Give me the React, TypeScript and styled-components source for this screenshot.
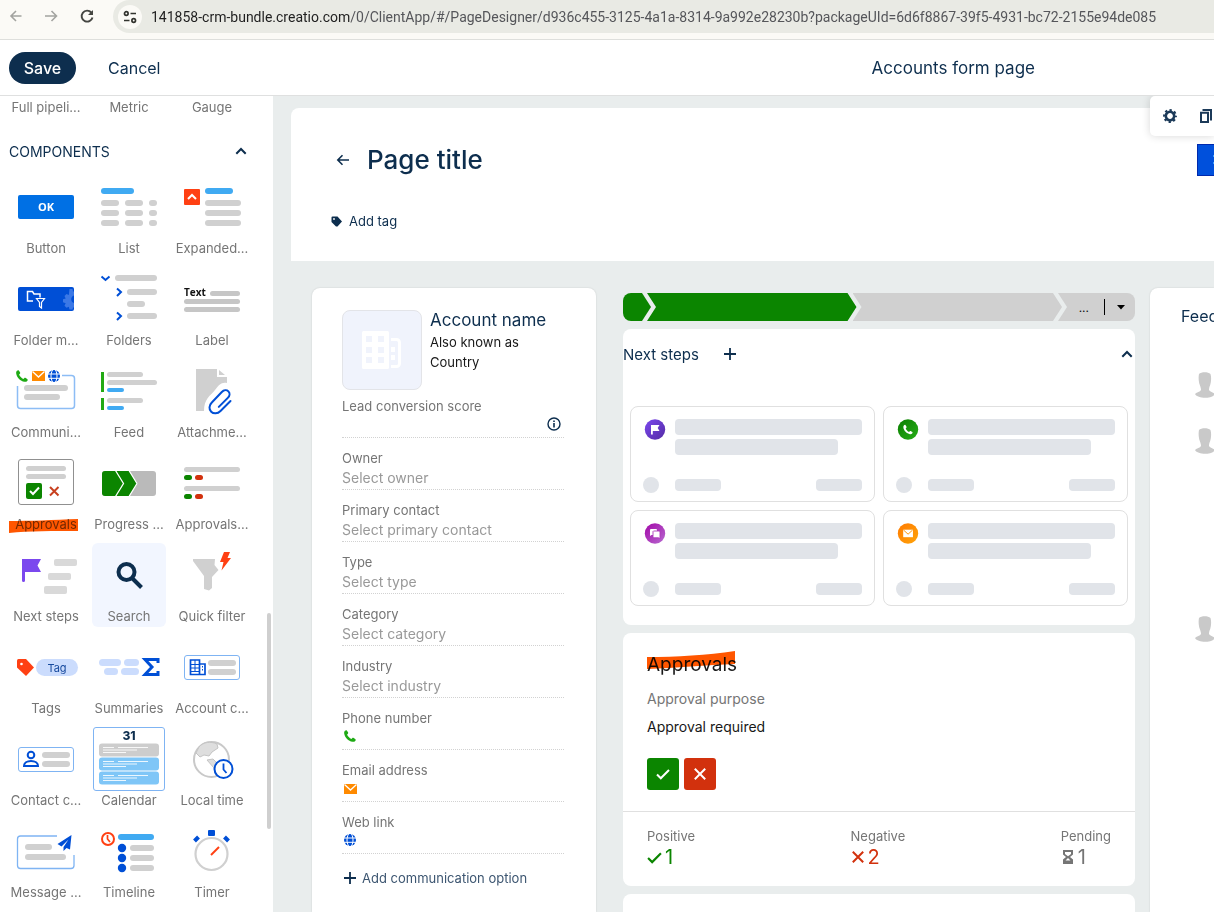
import React, { useId } from "react";
import styled, { createGlobalStyle } from "styled-components";

const navy = "#0d2e4e";
const blue = "#004fd6";
const sky = "#40aaf2";
const grey = "#d0d0d0";
const green = "#0b8500";
const red = "#d2310d";
const orangeRed = "#ff4013";

const GlobalStyle = createGlobalStyle`
  * { box-sizing: border-box; }
  body {
    margin: 0;
    overflow: hidden;
    font-family: Inter, "Open Sans", sans-serif;
    font-size: 13px;
    color: ${navy};
    background: #fff;
  }
  button, input { font: inherit; color: inherit; }
  button { border: 0; padding: 0; background: none; cursor: pointer; }
  h1, h2, h3, p { margin: 0; font-weight: 400; }
  svg { display: block; flex: none; }
`;

/* ---------- frame ---------- */

const Shell = styled.div`
  display: flex;
  flex-direction: column;
  height: 100vh;
`;

const BrowserBar = styled.div`
  flex: none;
  display: flex;
  align-items: flex-start;
  height: 40px;
  padding-left: 9px;
  background: #fbfaf6;
  border-bottom: 1px solid #dedfdc;
`;

const NavButtons = styled.nav`
  display: flex;
  align-items: center;
  gap: 20px;
  width: 104px;
  height: 32px;
`;

const AddressBar = styled.div`
  flex: 1;
  min-width: 0;
  display: flex;
  align-items: center;
  gap: 9px;
  height: 33px;
  padding-left: 5px;
  border-radius: 17px 0 0 17px;
  background: #e9eae4;
  overflow: hidden;
`;

const SiteInfo = styled.button`
  display: grid;
  place-items: center;
  flex: none;
  width: 24px;
  height: 24px;
  border-radius: 12px;
  background: #fbfaf6;
`;

const Url = styled.span`
  font-family: Roboto, "Open Sans", sans-serif;
  font-size: 14px;
  line-height: 20px;
  white-space: nowrap;
  color: #55565a;
`;

const Domain = styled.span`
  color: #1f1f1f;
`;

const Header = styled.header`
  flex: none;
  display: flex;
  align-items: center;
  height: 56px;
  padding: 0 179px 0 9px;
  border-bottom: 1px solid #dfe0e0;
  font-size: 16px;
`;

const SaveButton = styled.button`
  width: 67px;
  height: 32px;
  border-radius: 16px;
  background: ${navy};
  color: #fff;
  font-weight: 500;
`;

const CancelButton = styled.button`
  margin-left: 32px;
`;

const HeaderTitle = styled.h1`
  margin-left: auto;
  font-size: 17px;
  white-space: nowrap;
`;

const Workspace = styled.div`
  flex: 1;
  min-height: 0;
  display: flex;
`;

/* ---------- component palette ---------- */

const Sidebar = styled.aside`
  position: relative;
  flex: none;
  width: 273px;
  padding-left: 9px;
  overflow: hidden;
  color: #757575;
`;

const ScrollThumb = styled.div`
  position: absolute;
  top: 517px;
  right: 2px;
  width: 4px;
  height: 216px;
  border-radius: 2px;
  background: #cfcfcf;
`;

const TileGrid = styled.div`
  display: grid;
  grid-template-columns: repeat(3, 74px);
  gap: 8px 9px;
`;

const PreviousGroup = styled(TileGrid)`
  height: 24px;
  padding-top: 2px;
`;

const Tile = styled.button<{ $active?: boolean }>`
  position: relative;
  display: flex;
  flex-direction: column;
  align-items: center;
  height: 84px;
  border-radius: 6px;
  background: ${(p) => (p.$active ? "#f2f6ff" : "transparent")};
`;

const TileLabel = styled.span`
  line-height: 18px;
  white-space: nowrap;
  text-align: center;
`;

const GroupHeader = styled.button`
  display: flex;
  align-items: center;
  justify-content: space-between;
  width: 238px;
  height: 22px;
  margin: 20px 0 13px;
  color: ${navy};
  font-size: 14px;
`;

const Marker = styled.svg`
  position: absolute;
  mix-blend-mode: multiply;
  pointer-events: none;
`;

const TileMarker = styled(Marker)`
  left: 0;
  top: 67px;
`;

/* ---------- canvas ---------- */

const Canvas = styled.main`
  position: relative;
  flex: 1;
  min-width: 0;
  display: flex;
  flex-direction: column;
  padding: 12px 0 0 18px;
  background: #e9eded;
  overflow: hidden;
`;

const TitlePanel = styled.section`
  flex: none;
  display: flex;
  justify-content: space-between;
  height: 153px;
  padding: 36px 0 0 40px;
  border-radius: 8px 0 0 0;
  background: #fff;
`;

const TitleRow = styled.div`
  display: flex;
  align-items: center;
  gap: 17px;
  height: 32px;
  padding-left: 5px;
`;

const PageTitle = styled.h2`
  font-size: 26px;
  font-weight: 500;
  line-height: 32px;
`;

const AddTag = styled.button`
  display: flex;
  align-items: center;
  gap: 7px;
  margin-top: 35px;
  line-height: 20px;
`;

const PrimaryEdge = styled.button`
  width: 17px;
  height: 32px;
  padding-left: 15px;
  border: solid #0029ad;
  border-width: 1px 0 1px 1px;
  background: #0050dc;
`;

const FloatingTools = styled.div`
  position: absolute;
  top: 0;
  right: 0;
  display: flex;
  align-items: center;
  gap: 22px;
  width: 64px;
  height: 40px;
  padding-left: 13px;
  border-radius: 5px 0 0 5px;
  background: #fff;
  box-shadow: 0 0 8px rgba(0, 0, 0, 0.16);
  overflow: hidden;
`;

const Columns = styled.div`
  flex: 1;
  min-height: 0;
  display: grid;
  grid-template-columns: 284px minmax(0, 1fr) 64px;
  padding: 27px 0 0 21px;
`;

const Panel = styled.section`
  background: #fff;
  border-radius: 8px;
`;

/* ---------- account profile ---------- */

const Profile = styled(Panel)`
  padding: 22px 32px 0 30px;
  border-radius: 8px 8px 0 0;
  box-shadow: 0 0 2px rgba(0, 0, 0, 0.14);
`;

const ProfileTop = styled.div`
  display: flex;
  gap: 8px;
`;

const Logo = styled.div`
  display: grid;
  place-items: center;
  width: 80px;
  height: 80px;
  border: 1px solid #e3e4e8;
  border-radius: 8px;
  background: #f0f3fc;
`;

const Identity = styled.div`
  color: #181818;
  line-height: 20px;
`;

const AccountName = styled.h3`
  color: ${navy};
  font-size: 17px;
  line-height: 20px;
  margin-bottom: 2px;
`;

const Field = styled.div`
  display: flex;
  flex-direction: column;
  height: 52px;
  padding-top: 11px;
  border-bottom: 1px dotted #d2d2d2;
  color: #757575;
`;

const ScoreField = styled(Field)`
  height: 48px;
  padding-top: 7px;
`;

const FieldLabel = styled.label`
  line-height: 18px;
`;

const FieldValue = styled.div`
  display: flex;
  align-items: center;
  height: 18px;
`;

const FieldInput = styled.input`
  width: 100%;
  min-width: 0;
  height: 20px;
  padding: 0;
  border: 0;
  outline: 0;
  background: none;
  font-size: 14px;
  &::placeholder { color: #999; opacity: 1; }
`;

const AddOption = styled.button`
  display: flex;
  align-items: center;
  gap: 6px;
  margin-top: 14px;
  padding-left: 2px;
  line-height: 20px;
  color: #3d5671;
`;

/* ---------- middle column ---------- */

const Middle = styled.div`
  display: flex;
  flex-direction: column;
  gap: 8px;
  padding: 5px 15px 0 27px;
`;

const Stages = styled.div`
  flex: none;
  display: flex;
  height: 28px;
  border-radius: 8px;
  overflow: hidden;
`;

const StageStart = styled.div`
  width: 28px;
  background: ${green};
  clip-path: polygon(0 0, calc(100% - 9px) 0, 100% 50%, calc(100% - 9px) 100%, 0 100%);
`;

const Stage = styled.div<{ $done?: boolean }>`
  flex: 1;
  margin-left: -4px;
  background: ${(p) => (p.$done ? green : grey)};
  clip-path: polygon(0 0, calc(100% - 9px) 0, 100% 50%, calc(100% - 9px) 100%, 0 100%, 9px 50%);
`;

const StageMenu = styled.div`
  display: flex;
  align-items: center;
  justify-content: flex-end;
  width: 77px;
  margin-left: -4px;
  padding-right: 9px;
  background: ${grey};
  color: #111;
  font-size: 12px;
  clip-path: polygon(0 0, 100% 0, 100% 100%, 0 100%, 9px 50%);
`;

const StageCaret = styled.button`
  display: flex;
  align-items: center;
  height: 16px;
  margin-left: 15px;
  padding-left: 11px;
  border-left: 1px solid #000;
`;

const NextSteps = styled(Panel)`
  flex: none;
  height: 296px;
`;

const NextHeader = styled.div`
  display: flex;
  align-items: center;
  height: 50px;
  padding-right: 2px;
`;

const NextTitle = styled.h3`
  width: 101px;
  font-size: 15px;
`;

const Collapse = styled.button`
  margin-left: auto;
`;

const CardGrid = styled.div`
  display: grid;
  grid-template-columns: 1fr 1fr;
  gap: 8px;
  padding: 27px 7px 0;
`;

const StepCard = styled.article`
  display: grid;
  grid-template-columns: 32px 1fr;
  align-content: space-between;
  height: 96px;
  padding: 12px 12px 8px;
  border: 1px solid #e0e0e0;
  border-radius: 8px;
`;

const Bars = styled.div`
  display: flex;
  flex-direction: column;
  gap: 4px;
`;

const FootBars = styled.div`
  display: flex;
  justify-content: space-between;
  align-items: center;
`;

const Bone = styled.div<{ $size: "full" | "long" | "short" }>`
  width: ${(p) => ({ full: "100%", long: "87%", short: "46px" })[p.$size]};
  height: ${(p) => (p.$size === "short" ? "12px" : "16px")};
  border-radius: 4px;
  background: #e1e4e9;
`;

const BoneDot = styled.div`
  width: 16px;
  height: 16px;
  border-radius: 8px;
  background: #e1e4e9;
`;

const Approvals = styled(Panel)`
  flex: none;
`;

const ApprovalBody = styled.div`
  height: 179px;
  padding: 20px 24px 0;
  border-bottom: 1px solid #e0e0e0;
`;

const ApprovalTitle = styled.h3`
  position: relative;
  color: #181818;
  font-size: 19px;
  line-height: 24px;
`;

const TitleMarker = styled(Marker)`
  left: 0;
  top: -2px;
`;

const Purpose = styled.p<{ $strong?: boolean }>`
  margin-top: ${(p) => (p.$strong ? 8 : 12)}px;
  font-size: 14px;
  line-height: 20px;
  color: ${(p) => (p.$strong ? "#181818" : "#757575")};
`;

const Decisions = styled.div`
  display: flex;
  gap: 5px;
  margin-top: 21px;
`;

const Decision = styled.button<{ $color: string }>`
  display: grid;
  place-items: center;
  width: 32px;
  height: 32px;
  border-radius: 3px;
  background: ${(p) => p.$color};
`;

const Totals = styled.div`
  display: flex;
  justify-content: space-between;
  height: 74px;
  padding: 16px 24px 0;
  color: #757575;
`;

const TotalLabel = styled.div`
  line-height: 16px;
`;

const TotalValue = styled.div<{ $color: string }>`
  display: flex;
  align-items: center;
  gap: 3px;
  height: 26px;
  font-size: 20px;
  color: ${(p) => p.$color};
`;

const NextPanel = styled(Panel)`
  flex: 1;
  border-radius: 8px 8px 0 0;
`;

/* ---------- feed column ---------- */

const Feed = styled(Panel)`
  border-radius: 8px 0 0 0;
  box-shadow: 0 0 2px rgba(0, 0, 0, 0.14);
  padding-top: 17px;
  overflow: hidden;
`;

const FeedTitle = styled.h3`
  padding-left: 31px;
  font-size: 16px;
  line-height: 22px;
`;

const FeedItem = styled.div<{ $tall?: boolean }>`
  height: ${(p) => (p.$tall ? 188 : 56)}px;
  padding-left: 45px;
`;

const FeedList = styled.div`
  margin-top: 45px;
`;

/* ---------- glyphs ---------- */

const Chevron = () => (
  <svg width="12" height="8" viewBox="0 0 12 8" aria-hidden="true">
    <path d="M1.3 6.800 6 2l4.700 4.800" fill="none" stroke={navy} strokeWidth="2" />
  </svg>
);

const Plus = () => (
  <svg width="12" height="12" viewBox="0 0 12 12" aria-hidden="true">
    <path d="M6 0v12M0 6h12" stroke={navy} strokeWidth="1.800" />
  </svg>
);

const phonePath =
  "M1 .8C.3 1.500 0 2.400.2 3.500.8 7.600 4.400 11.200 8.500 11.800c1.100.2 2-.1 2.700-.8.6-.6.700-1.200.3-1.800L9.700 8.100c-.6-.4-1.100-.3-1.500.1l-.8.8C5.500 8.200 3.800 6.500 3.100 4.600l.8-.8c.4-.4.5-.9.1-1.500L2.800.5C2.300-.1 1.600.2 1 .8z";

const PhoneShape = ({ color }: { color: string }) => <path d={phonePath} fill={color} />;

const MailShape = ({ color, fold }: { color: string; fold: string }) => (
  <>
    <rect width="13" height="10" fill={color} />
    <path d="M.5.5 6.500 6l6-5.500" fill="none" stroke={fold} strokeWidth="1.300" />
  </>
);

const GlobeShape = () => (
  <>
    <circle r="6" fill={blue} />
    <path
      d="M-6-2h12M-6 2.300h12M-1.500-6c-2 4-2 8 0 12M1.500-6c2 4 2 8 0 12"
      fill="none"
      stroke="#fff"
      strokeWidth="1"
    />
  </>
);

const B = ({ x, y, w, h = 6, c = grey, r }: { x: number; y: number; w: number; h?: number; c?: string; r?: number }) => (
  <rect x={x} y={y} width={w} height={h} rx={r ?? h / 2} fill={c} />
);

const Frame = ({ x, y, w, h, c = "#7fb4f3" }: { x: number; y: number; w: number; h: number; c?: string }) => (
  <rect x={x} y={y} width={w} height={h} rx="2.500" fill="#fff" stroke={c} />
);

const CalendarBlock = ({ y, c }: { y: number; c: string }) => (
  <>
    <rect x="7" y={y} width="60" height="13" rx="3" fill={c} />
    <path
      d={`M11 ${y + 4}h11M26 ${y + 4}h30M11 ${y + 6.5}h34M11 ${y + 9}h23`}
      stroke="#fff"
      strokeOpacity=".85"
      strokeWidth="1"
    />
  </>
);

const svgFont = { fontFamily: '"Open Sans", sans-serif', fontWeight: 700 };

const drawings: Record<string, React.ReactNode> = {
  Button: (
    <>
      <rect x="9" y="20" width="56" height="24" rx="2" fill="#0070e4" />
      <text x="37" y="36" textAnchor="middle" fontSize="11" fill="#fff" {...svgFont}>OK</text>
    </>
  ),
  List: (
    <>
      <B x={9} y={13} w={33} c={sky} />
      {[25, 35, 45].map((y) => (
        <g key={y}>
          <B x={9} y={y} w={18} />
          <B x={33} y={y} w={18} />
          <B x={57} y={y} w={8} />
        </g>
      ))}
    </>
  ),
  "Expanded...": (
    <>
      <rect x="9" y="14" width="16" height="16" rx="1" fill={orangeRed} />
      <path d="m13 24 4-4 4 4" fill="none" stroke="#fff" strokeWidth="2" />
      <B x={30} y={13} w={28} c={sky} />
      <B x={30} y={25} w={36} />
      <B x={30} y={35} w={36} />
      <B x={30} y={45} w={36} />
    </>
  ),
  "Folder m...": (
    <>
      <rect x="9" y="20" width="56" height="24" rx="2" fill={blue} />
      <path d="M24 34h-5.500v-9.500h5l1.500 2.500h6v3.500" fill="none" stroke="#fff" strokeWidth="1.500" />
      <path d="M27.500 31.500h8l-3 4v5.500l-2-1.500v-4z" fill="none" stroke="#fff" strokeWidth="1.200" />
      <path
        d="M60.500 22h3l.5 2.500H65v4a4 4 0 0 0 0 7.600v4.400h-1l-.5 2h-3l-.7-2.700-2.300 1-2-2 1.200-2.500-2.700-1v-3l2.700-.8-1.200-2.400 2-2.100 2.300 1z"
        fill="#3b78e6"
      />
    </>
  ),
  Folders: (
    <>
      <path d="m9.500 9.500 4 3.500 4-3.500M25 21.500l4 3.500-4 4M25 45.500l4 3.500-4 4" fill="none" stroke={blue} strokeWidth="2" />
      <B x={23} y={8} w={42} />
      <B x={35} y={22} w={30} />
      <B x={35} y={34} w={18} />
      <B x={35} y={46} w={30} />
    </>
  ),
  Label: (
    <>
      <text x="9" y="29" fontSize="10" fill="#111" {...svgFont}>Text</text>
      <B x={35} y={24} w={30} h={5} c="#c6c6c6" />
      <B x={9} y={32} w={56} h={5} c="#c6c6c6" />
      <B x={9} y={40} w={56} h={5} c="#c6c6c6" />
    </>
  ),
  "Communi...": (
    <>
      <path
        d="M53 16.500h9.500a3 3 0 0 1 3 3v27a3 3 0 0 1-3 3h-51a3 3 0 0 1-3-3V27"
        fill="none"
        stroke="#8dbdf5"
        strokeWidth="1.500"
      />
      <g transform="translate(7 11)"><PhoneShape color="#1eaa14" /></g>
      <g transform="translate(23 12)"><MailShape color="#ff8a00" fold="#fff" /></g>
      <g transform="translate(45 17)"><GlobeShape /></g>
      <B x={15} y={26} w={44} />
      <B x={15} y={35} w={36} />
    </>
  ),
  Feed: (
    <>
      <rect x="9" y="13" width="3" height="20" fill="#22aa14" />
      <rect x="9" y="39" width="3" height="12" fill="#22aa14" />
      <B x={15} y={13} w={36} h={5} />
      <B x={15} y={21} w={50} h={5} />
      <B x={15} y={29} w={17} h={4} c={sky} />
      <B x={15} y={39} w={36} h={5} />
      <B x={15} y={47} w={17} h={4} c={sky} />
    </>
  ),
  "Attachme...": (
    <>
      <path d="M21 10h21v8h10v6c-6-1-8 2-12 7-5 6-11 9-11 21h-8z" fill={grey} />
      <path d="M44 11v5h6z" fill={grey} />
      <path
        d="M55.500 42 45.500 52c-3 3-7 3-9.300.7-2.500-2.500-2.200-6.400.6-9.200l10-10.500c2-2 4.800-2.400 6.600-.6 1.800 1.800 1.400 4.500-.6 6.500l-9 9"
        fill="none"
        stroke={blue}
        strokeWidth="2"
        strokeLinecap="round"
      />
    </>
  ),
  Approvals: (
    <>
      <Frame x={9.5} y={8.5} w={55} h={45} c="#909090" />
      <B x={17} y={15} w={40} h={5} />
      <B x={17} y={23} w={40} h={5} />
      <rect x="17" y="32" width="16" height="16" rx="2" fill={green} />
      <path d="m21 40 3 3 6-6.500" fill="none" stroke="#fff" strokeWidth="2" />
      <path d="m41 36 8.500 8.500M49.500 36 41 44.500" stroke="#c8401f" strokeWidth="2" />
    </>
  ),
  "Progress ...": (
    <>
      <rect x="10" y="20" width="54" height="25" rx="3" fill="#bababa" />
      <path d="M13 20h24l8.500 12.500L37 45H13a3 3 0 0 1-3-3V23a3 3 0 0 1 3-3z" fill={green} />
      <path d="m23.500 19.500 8 13-8 13M37 19.500l8 13-8 13" fill="none" stroke="#fff" strokeWidth="1.300" />
    </>
  ),
  "Approvals...": (
    <>
      {[16, 35].map((y) => (
        <g key={y}>
          <B x={9} y={y} w={56} h={5} />
          <B x={9} y={y + 8} w={8} h={5} c={green} />
          <B x={20} y={y + 8} w={8} h={5} c={red} />
        </g>
      ))}
    </>
  ),
  "Next steps": (
    <>
      <path d="M13 16h19l-3.500 6.500L32 29H16v8.500a1.500 1.500 0 0 1-3 0z" fill="#7b48ee" />
      <B x={45} y={16} w={23} h={7} c="#d9d9d9" r={2} />
      <B x={39} y={30} w={23} h={7} c="#d9d9d9" r={2} />
      <B x={35} y={43} w={23} h={8} c="#d9d9d9" r={2} />
    </>
  ),
  Search: (
    <>
      <circle cx="34.500" cy="29" r="8" fill="none" stroke={navy} strokeWidth="4" />
      <path d="m40 35 9.500 9.500" stroke={navy} strokeWidth="4" />
    </>
  ),
  "Quick filter": (
    <>
      <path d="M18 16h22l-.5 6 4 5-6.500 7v11l-3 2.500-5-1.500V33L18 18z" fill={grey} />
      <path d="M49 9h6l-2.500 6H56L46.500 27.500l2-8.500H45z" fill={orangeRed} />
    </>
  ),
  Tags: (
    <>
      <path d="M9.500 24H17l8 8.500-8 8.500-9-8.500v-7A1.500 1.500 0 0 1 9.500 24z" fill={orangeRed} />
      <circle cx="12.500" cy="29" r="1.300" fill="#fff" />
      <B x={27} y={24} w={42} h={17} c="#cbdcfd" />
      <text x="48" y="36.500" textAnchor="middle" fontSize="11" fill="#174a9e" fontFamily="Inter, sans-serif" fontWeight="400">Tag</text>
    </>
  ),
  Summaries: (
    <>
      <B x={7} y={24} w={22} h={7} c="#cbdcfd" />
      <B x={32} y={24} w={15} h={7} c="#cbdcfd" />
      <B x={12} y={33} w={14} h={7} c="#cbdcfd" />
      <B x={29} y={33} w={18} h={7} c="#cbdcfd" />
      <path d="M66 28v-3.500H53l7 7.500-7 7.500h13V36" fill="none" stroke={blue} strokeWidth="3" />
    </>
  ),
  "Account c...": (
    <>
      <Frame x={9.5} y={20.5} w={55} h={24} />
      <path d="M15.500 25h9v14.500h-9zM25 29h5v10.500h-5" fill="none" stroke={blue} strokeWidth="1.700" />
      <path d="M20 25v12M15 29.500h9M15 33h9M15 36.500h9M27.500 31v1.500M27.500 34v1.500" stroke={blue} strokeWidth="1" />
      <B x={33} y={25} w={28} />
      <B x={33} y={34} w={28} />
    </>
  ),
  "Contact c...": (
    <>
      <Frame x={9.5} y={20.5} w={55} h={24} />
      <circle cx="22" cy="28" r="3.300" fill="none" stroke={blue} strokeWidth="2" />
      <path d="M15 39c0-3 3-5 7-5s7 2 7 5z" fill="none" stroke={blue} strokeWidth="2" />
      <B x={33} y={25} w={28} />
      <B x={33} y={34} w={28} />
    </>
  ),
  Calendar: (
    <>
      <Frame x={1.5} y={0.5} w={71} h={63} />
      <text x="37" y="13" textAnchor="middle" fontSize="12" fill={navy} fontFamily="Inter, sans-serif" fontWeight="800">31</text>
      <CalendarBlock y={16.5} c="#cdcdcd" />
      <CalendarBlock y={30.5} c="#7fc6f7" />
      <CalendarBlock y={44.5} c="#7fc6f7" />
    </>
  ),
  "Local time": (
    <>
      <circle cx="36.500" cy="32.500" r="17.500" fill="#fff" stroke="#c9c9c9" strokeWidth="2" />
      <path
        d="M24 20c4-5 12-6 18-3l1 4-6 4-3 4-5-1-4 2-4-4zM32 33l6-1 4 4 5-3 5 3-4 10-7 3-2-8z"
        fill="#dedede"
        stroke="#c4c4c4"
      />
      <circle cx="48.500" cy="42" r="9" fill="#fff" stroke={blue} strokeWidth="2" />
      <path d="M48.500 36.500v6l3 3.500" fill="none" stroke={blue} strokeWidth="1.800" />
    </>
  ),
  "Message ...": (
    <>
      <path
        d="M48 17H11.500a3 3 0 0 0-3 3v26.500a3 3 0 0 0 3 3H62a3 3 0 0 0 3-3V36"
        fill="none"
        stroke="#7fb4f3"
        strokeWidth="1.300"
      />
      <B x={16} y={25} w={27} />
      <B x={16} y={35} w={41} />
      <path d="M62.500 16 48.500 25l4 2.500 7-7-5 7.500v4l3-3 3.500 1.500z" fill={blue} />
    </>
  ),
  Timeline: (
    <>
      <circle cx="16" cy="20" r="6" fill="#fff" stroke={orangeRed} strokeWidth="2" />
      <path d="M15.500 16v4l2.500 3" fill="none" stroke={orangeRed} strokeWidth="1.700" />
      <B x={26} y={15} w={36} c={sky} />
      {[26, 36, 46].map((y) => (
        <g key={y}>
          <circle cx="30" cy={y + 3} r="4.200" fill={blue} />
          <B x={38} y={y} w={24} />
        </g>
      ))}
    </>
  ),
  Timer: (
    <>
      <circle cx="36.500" cy="35" r="16" fill="#fff" stroke={grey} strokeWidth="2.200" />
      <rect x="33" y="11" width="7" height="6" rx="1" fill={blue} />
      <path d="m19.500 22 4-4M53.500 22l-4-4" stroke={blue} strokeWidth="4" />
      <path d="m36 36 8-8" stroke={orangeRed} strokeWidth="2" />
    </>
  ),
};

const Avatar = () => (
  <svg width="20" height="26" viewBox="0 0 20 26">
    <path
      d="M4 2C6-.2 13-.5 15.500 2c1 3 .7 8-.3 11-.8 2-1.200 3-1.200 5 1 2 4 2 6 4-3 5-17 5-20 0 2-2 5-2 6-4 0-2-.6-3-1.200-5C3.600 10 3.300 5 4 2z"
      fill="#c9c9c9"
    />
  </svg>
);

const StepBadge = ({ from, to, children }: { from: string; to: string; children: React.ReactNode }) => {
  const id = useId();
  return (
    <svg width="24" height="21" viewBox="-1.500 0 24 21">
      <defs>
        <linearGradient id={id} x1="0" y1="0" x2="1" y2="1">
          <stop stopColor={from} />
          <stop offset="1" stopColor={to} />
        </linearGradient>
      </defs>
      <circle cx="10.500" cy="10.500" r="10.200" fill={`url(#${id})`} />
      {children}
    </svg>
  );
};

const steps = [
  {
    name: "task",
    from: "#7b48ee",
    to: "#532ba4",
    glyph: <path d="M6.500 6h8.500l-1.800 3 1.800 3H8.300v3.500H6.500z" fill="#fff" />,
  },
  {
    name: "call",
    from: "#0a7e00",
    to: "#27ae18",
    glyph: <g transform="translate(5.700 5.700) scale(.8)"><PhoneShape color="#fff" /></g>,
  },
  {
    name: "chat",
    from: "#a207a8",
    to: "#b86bd0",
    glyph: (
      <>
        <path d="M6.500 6h5a1 1 0 0 1 1 1v5H7l-1.500 1V7a1 1 0 0 1 1-1z" fill="#fff" />
        <path d="M9 8h5.500a1 1 0 0 1 1 1v6.500L14 14.800H9.500a1 1 0 0 1-1-1V8.500z" fill="#fff" stroke="#ad3abb" strokeWidth=".9" />
      </>
    ),
  },
  {
    name: "email",
    from: "#ff7a00",
    to: "#ffa40a",
    glyph: <g transform="translate(5.700 6.700) scale(.75)"><MailShape color="#fff" fold="#ff9200" /></g>,
  },
];

const CheckGlyph = ({ color, size = 14 }: { color: string; size?: number }) => (
  <svg width={size} height={size} viewBox="0 0 14 14">
    <path d="m1 7.500 3.800 3.800L13 3" fill="none" stroke={color} strokeWidth="2" />
  </svg>
);

const CrossGlyph = ({ color }: { color: string }) => (
  <svg width="14" height="14" viewBox="0 0 14 14">
    <path d="m1.800 1.800 10.400 10.400M12.200 1.800 1.800 12.200" stroke={color} strokeWidth="2" />
  </svg>
);

/* ---------- page ---------- */

const tiles = Object.keys(drawings);
const selects = ["Owner", "Primary contact", "Type", "Category", "Industry"];

const contacts = [
  {
    label: "Phone number",
    icon: <svg width="16" height="16" viewBox="0 0 16 16"><g transform="translate(2 2)"><PhoneShape color="#1eaa14" /></g></svg>,
  },
  {
    label: "Email address",
    icon: <svg width="16" height="16" viewBox="0 0 16 16"><g transform="translate(2 4)"><MailShape color="#ff8a00" fold="#fff" /></g></svg>,
  },
  {
    label: "Web link",
    icon: <svg width="16" height="16" viewBox="0 0 16 16"><g transform="translate(8 8)"><GlobeShape /></g></svg>,
  },
];

export default function App() {
  return (
    <Shell>
      <GlobalStyle />
      <BrowserBar>
        <NavButtons aria-label="Browser">
          <button aria-label="Back">
            <svg width="14" height="14" viewBox="0 0 14 14">
              <path d="M12.500 7H2M7 2 2 7l5 5" fill="none" stroke="#a3a4a0" strokeWidth="1.600" />
            </svg>
          </button>
          <button aria-label="Forward">
            <svg width="16" height="14" viewBox="0 0 16 14">
              <path d="M2 7h11M8.500 2l5 5-5 5" fill="none" stroke="#a3a4a0" strokeWidth="1.600" />
            </svg>
          </button>
          <button aria-label="Reload">
            <svg width="16" height="16" viewBox="0 0 16 16">
              <path d="M13.500 9.500A5.500 5.500 0 1 1 12.300 4.500" fill="none" stroke="#454642" strokeWidth="1.900" />
              <path d="M14 2v5H9z" fill="#454642" />
            </svg>
          </button>
        </NavButtons>
        <AddressBar>
          <SiteInfo aria-label="Site information">
            <svg width="14" height="14" viewBox="0 0 14 14" fill="none" stroke="#33342f" strokeWidth="1.700">
              <circle cx="3.300" cy="3.500" r="1.800" />
              <path d="M7.500 3.500H13M1 10.500h5.500" />
              <circle cx="10.700" cy="10.500" r="1.800" />
            </svg>
          </SiteInfo>
          <Url>
            <Domain>141858-crm-bundle.creatio.com</Domain>
            /0/ClientApp/#/PageDesigner/d936c455-3125-4a1a-8314-9a992e28230b?packageUId=6d6f8867-39f5-4931-bc72-2155e94de085
          </Url>
        </AddressBar>
      </BrowserBar>

      <Header>
        <SaveButton>Save</SaveButton>
        <CancelButton>Cancel</CancelButton>
        <HeaderTitle>Accounts form page</HeaderTitle>
      </Header>

      <Workspace>
        <Sidebar>
          <PreviousGroup>
            {["Full pipeli...", "Metric", "Gauge"].map((name) => (
              <TileLabel key={name}>{name}</TileLabel>
            ))}
          </PreviousGroup>
          <GroupHeader>
            COMPONENTS
            <Chevron />
          </GroupHeader>
          <TileGrid>
            {tiles.map((name) => (
              <Tile key={name} $active={name === "Search"}>
                <svg width="74" height="64" viewBox="0 0 74 64">{drawings[name]}</svg>
                <TileLabel>{name}</TileLabel>
                {name === "Approvals" && (
                  <TileMarker width="70" height="17" viewBox="0 0 70 17">
                    <path d="M0 3C20 3 45 2 69 1v12C45 13 20 13 0 15z" fill="#ff5600" />
                  </TileMarker>
                )}
              </Tile>
            ))}
          </TileGrid>
          <ScrollThumb />
        </Sidebar>

        <Canvas>
          <TitlePanel>
            <div>
              <TitleRow>
                <button aria-label="Go back">
                  <svg width="14" height="12" viewBox="0 0 14 12">
                    <path d="M13 6H2M6.500 1.200 1.800 6l4.700 4.800" fill="none" stroke={navy} strokeWidth="1.600" />
                  </svg>
                </button>
                <PageTitle>Page title</PageTitle>
              </TitleRow>
              <AddTag>
                <svg width="11" height="11" viewBox="0 0 11 11">
                  <path d="M1.500.5H6.500L11 5.500 6.500 10.500H5L.5 6V1.500a1 1 0 0 1 1-1z" fill={navy} />
                  <circle cx="3" cy="3" r=".9" fill="#fff" />
                </svg>
                Add tag
              </AddTag>
            </div>
            <PrimaryEdge aria-label="Page action">
              <svg width="1" height="10" viewBox="0 0 1 10">
                <path d="M0 1h1M0 8h1" stroke="#3b9bff" strokeWidth="2" />
              </svg>
            </PrimaryEdge>
          </TitlePanel>

          <Columns>
            <Profile>
              <ProfileTop>
                <Logo>
                  <svg width="40" height="40" viewBox="0 0 40 40">
                    <rect x="0" y="1" width="27" height="38" rx="1.500" fill="#fff" />
                    <path d="M29 9.500h5.500a3 3 0 0 1 3 3v21a3 3 0 0 1-3 3H29" fill="none" stroke="#fff" strokeWidth="3" />
                    <path d="M29 17h4v5h-4zM29 25h4v5h-4z" fill="#fff" />
                    <path
                      d="M4 6h6v6H4zM16 6h6v6h-6zM4 17h6v6H4zM16 17h6v6h-6zM4 27h6v6H4zM16 27h6v6h-6z"
                      fill="#f0f3fc"
                    />
                  </svg>
                </Logo>
                <Identity>
                  <AccountName>Account name</AccountName>
                  <p>Also known as</p>
                  <p>Country</p>
                </Identity>
              </ProfileTop>
              <ScoreField>
                <FieldLabel htmlFor="score">Lead conversion score</FieldLabel>
                <FieldValue>
                  <FieldInput id="score" />
                  <svg width="18" height="16" viewBox="0 0 18 16">
                    <circle cx="8" cy="8" r="6" fill="none" stroke={navy} strokeWidth="1.400" />
                    <path d="M8 7v4.500M8 4.500V6" stroke={navy} strokeWidth="1.600" />
                  </svg>
                </FieldValue>
              </ScoreField>
              {selects.map((name) => (
                <Field key={name}>
                  <FieldLabel htmlFor={name}>{name}</FieldLabel>
                  <FieldInput id={name} placeholder={`Select ${name.toLowerCase()}`} />
                </Field>
              ))}
              {contacts.map(({ label, icon }) => (
                <Field key={label}>
                  <FieldLabel htmlFor={label}>{label}</FieldLabel>
                  <FieldValue>
                    {icon}
                    <FieldInput id={label} />
                  </FieldValue>
                </Field>
              ))}
              <AddOption>
                <Plus />
                Add communication option
              </AddOption>
            </Profile>

            <Middle>
              <Stages>
                <StageStart />
                <Stage $done />
                <Stage />
                <StageMenu>
                  ...
                  <StageCaret aria-label="Choose stage">
                    <svg width="10" height="5" viewBox="0 0 10 5"><path d="M1 0h8L5 4.500z" fill="#000" /></svg>
                  </StageCaret>
                </StageMenu>
              </Stages>

              <NextSteps>
                <NextHeader>
                  <NextTitle>Next steps</NextTitle>
                  <button aria-label="Add step"><Plus /></button>
                  <Collapse aria-label="Collapse"><Chevron /></Collapse>
                </NextHeader>
                <CardGrid>
                  {steps.map((s) => (
                    <StepCard key={s.name}>
                      <StepBadge from={s.from} to={s.to}>{s.glyph}</StepBadge>
                      <Bars>
                        <Bone $size="full" />
                        <Bone $size="long" />
                      </Bars>
                      <BoneDot />
                      <FootBars>
                        <Bone $size="short" />
                        <Bone $size="short" />
                      </FootBars>
                    </StepCard>
                  ))}
                </CardGrid>
              </NextSteps>

              <Approvals>
                <ApprovalBody>
                  <ApprovalTitle>
                    Approvals
                    <TitleMarker width="88" height="20" viewBox="0 0 88 20">
                      <path d="M0 6c30 0 60-2 88-6v13c-28 1-60 4-88 5z" fill="#ff5600" />
                    </TitleMarker>
                  </ApprovalTitle>
                  <Purpose>Approval purpose</Purpose>
                  <Purpose $strong>Approval required</Purpose>
                  <Decisions>
                    <Decision $color={green} aria-label="Approve"><CheckGlyph color="#fff" /></Decision>
                    <Decision $color={red} aria-label="Reject"><CrossGlyph color="#fff" /></Decision>
                  </Decisions>
                </ApprovalBody>
                <Totals>
                  <div>
                    <TotalLabel>Positive</TotalLabel>
                    <TotalValue $color={green}><CheckGlyph color={green} size={15} />1</TotalValue>
                  </div>
                  <div>
                    <TotalLabel>Negative</TotalLabel>
                    <TotalValue $color={red}><CrossGlyph color={red} />2</TotalValue>
                  </div>
                  <div>
                    <TotalLabel>Pending</TotalLabel>
                    <TotalValue $color="#757575">
                      <svg width="14" height="14" viewBox="0 0 14 14">
                        <path
                          d="M2 0h10v4.500L9 7l3 2.500V14H2V9.500L5 7 2 4.500zM4 2v2l3 2.200L10 4V2zM7 8 4.500 10.500h5z"
                          fill="#757575"
                          fillRule="evenodd"
                        />
                      </svg>
                      1
                    </TotalValue>
                  </div>
                </Totals>
              </Approvals>
              <NextPanel />
            </Middle>

            <Feed>
              <FeedTitle>Feed</FeedTitle>
              <FeedList>
                <FeedItem><Avatar /></FeedItem>
                <FeedItem $tall><Avatar /></FeedItem>
                <FeedItem><Avatar /></FeedItem>
              </FeedList>
            </Feed>
          </Columns>

          <FloatingTools>
            <button aria-label="Settings">
              <svg width="14" height="14" viewBox="-7 -7 14 14">
                <circle r="4.200" fill="none" stroke="#1c3a59" strokeWidth="2.600" />
                <circle r="6" fill="none" stroke="#1c3a59" strokeWidth="1.900" strokeDasharray="2.356 2.356" strokeDashoffset="1.178" />
              </svg>
            </button>
            <button aria-label="Copy">
              <svg width="14" height="14" viewBox="0 0 14 14">
                <path d="M2 3.800h7v9.200H2zM3.500 1H12v10.500" fill="none" stroke="#1c3a59" strokeWidth="2" />
              </svg>
            </button>
          </FloatingTools>
        </Canvas>
      </Workspace>
    </Shell>
  );
}
